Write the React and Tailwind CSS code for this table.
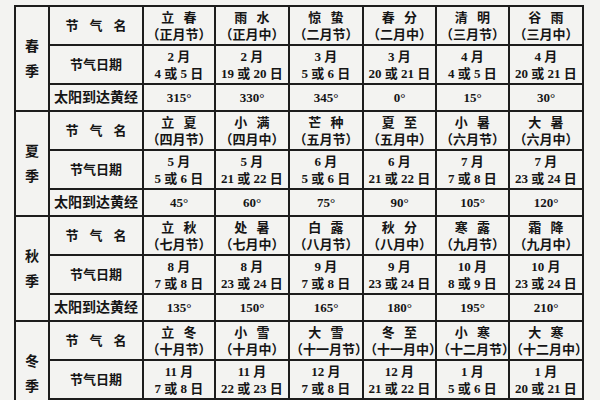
const seasons = [
  {
    name: ["春", "季"],
    terms: [
      ["立 春", "（正月节）", "2 月", "4 或 5 日", "315°"],
      ["雨 水", "（正月中）", "2 月", "19 或 20 日", "330°"],
      ["惊 蛰", "（二月节）", "3 月", "5 或 6 日", "345°"],
      ["春 分", "（二月中）", "3 月", "20 或 21 日", "0°"],
      ["清 明", "（三月节）", "4 月", "4 或 5 日", "15°"],
      ["谷 雨", "（三月中）", "4 月", "20 或 21 日", "30°"],
    ],
  },
  {
    name: ["夏", "季"],
    terms: [
      ["立 夏", "（四月节）", "5 月", "5 或 6 日", "45°"],
      ["小 满", "（四月中）", "5 月", "21 或 22 日", "60°"],
      ["芒 种", "（五月节）", "6 月", "5 或 6 日", "75°"],
      ["夏 至", "（五月中）", "6 月", "21 或 22 日", "90°"],
      ["小 暑", "（六月节）", "7 月", "7 或 8 日", "105°"],
      ["大 暑", "（六月中）", "7 月", "23 或 24 日", "120°"],
    ],
  },
  {
    name: ["秋", "季"],
    terms: [
      ["立 秋", "（七月节）", "8 月", "7 或 8 日", "135°"],
      ["处 暑", "（七月中）", "8 月", "23 或 24 日", "150°"],
      ["白 露", "（八月节）", "9 月", "7 或 8 日", "165°"],
      ["秋 分", "（八月中）", "9 月", "23 或 24 日", "180°"],
      ["寒 露", "（九月节）", "10 月", "8 或 9 日", "195°"],
      ["霜 降", "（九月中）", "10 月", "23 或 24 日", "210°"],
    ],
  },
  {
    name: ["冬", "季"],
    terms: [
      ["立 冬", "（十月节）", "11 月", "7 或 8 日", "225°"],
      ["小 雪", "（十月中）", "11 月", "22 或 23 日", "240°"],
      ["大 雪", "（十一月节）", "12 月", "7 或 8 日", "255°"],
      ["冬 至", "（十一月中）", "12 月", "21 或 22 日", "270°"],
      ["小 寒", "（十二月节）", "1 月", "5 或 6 日", "285°"],
      ["大 寒", "（十二月中）", "1 月", "20 或 21 日", "300°"],
    ],
  },
];

const cell = "border-2 border-[#1c1c1c] p-0 text-center align-middle";

export default function App() {
  return (
    <div
      className="h-[400px] w-[600px] overflow-hidden bg-[#f3f3f1] pl-[14px] pt-[5px] text-[13px] font-bold leading-[17px] text-[#151515]"
      style={{ fontFamily: '"Liberation Serif", "Noto Sans CJK SC", serif' }}
    >
      <table className="w-[568px] table-fixed border-collapse">
        <colgroup>
          <col className="w-[34px]" />
          <col className="w-[94px]" />
          <col className="w-[72px]" />
          <col className="w-[74px]" />
          <col className="w-[74px]" />
          <col className="w-[73px]" />
          <col className="w-[73px]" />
          <col className="w-[74px]" />
        </colgroup>
        <tbody>
          {seasons.map((s) => (
            <>
              <tr key={s.name[0] + "a"} className="h-[39px]">
                <td rowSpan={3} className={cell}>
                  <div className="flex flex-col items-center gap-[8px] text-[14px]">
                    <span>{s.name[0]}</span>
                    <span>{s.name[1]}</span>
                  </div>
                </td>
                <td className={cell + " whitespace-nowrap pl-[11px] tracking-[11px]"}>节气名</td>
                {s.terms.map((t) => (
                  <td key={t[0]} className={cell}>
                    <div className="whitespace-pre [word-spacing:6px]">{t[0]}</div>
                    <div className="whitespace-nowrap">{t[1]}</div>
                  </td>
                ))}
              </tr>
              <tr key={s.name[0] + "b"} className="h-[39px]">
                <td className={cell}>节气日期</td>
                {s.terms.map((t) => (
                  <td key={t[0]} className={cell}>
                    <div>{t[2]}</div>
                    <div className="whitespace-nowrap">{t[3]}</div>
                  </td>
                ))}
              </tr>
              <tr key={s.name[0] + "c"} className="h-[27px]">
                <td className={cell + " text-[14px]"}>太阳到达黄经</td>
                {s.terms.map((t) => (
                  <td key={t[0]} className={cell + " font-semibold"}>
                    {t[4]}
                  </td>
                ))}
              </tr>
            </>
          ))}
        </tbody>
      </table>
    </div>
  );
}
